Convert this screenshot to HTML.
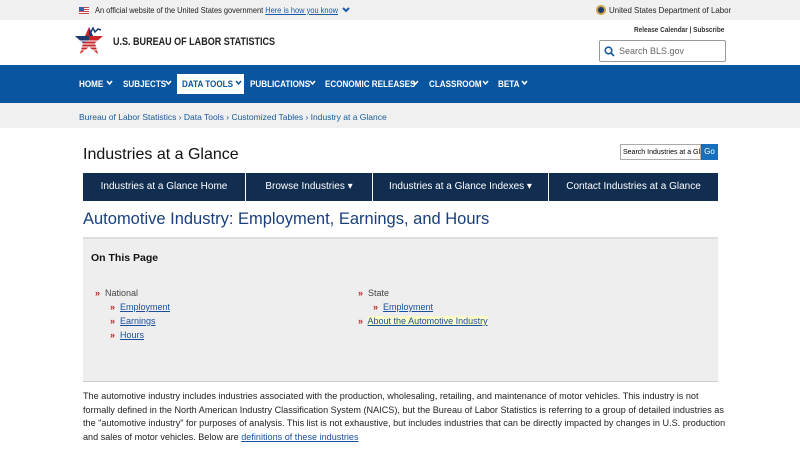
<!DOCTYPE html>
<html><head><style>
*{margin:0;padding:0;box-sizing:border-box}
body{width:800px;height:450px;overflow:hidden;font-family:"Liberation Sans",sans-serif;background:#fff;position:relative}
.a{position:absolute}
.top{left:0;top:0;width:800px;height:20px;background:#f0f0f0;font-size:8px;color:#222}
.hdr{left:0;top:20px;width:800px;height:45px;background:#fff}
.nav{left:0;top:65px;width:800px;height:38px;background:#0a559f}
.nav span{position:absolute;top:14px;font-size:9px;font-weight:bold;color:#fff;transform:scaleX(.9);transform-origin:left;white-space:nowrap}
.nav svg{position:absolute;top:15px}
.bc{left:0;top:103px;width:800px;height:25px;background:#f0f0f0;font-size:8.5px;color:#1a5a96}
.sub{top:173px;height:28px;background:#112e51;color:#fff;font-size:10px;text-align:center;line-height:28px}
a{color:#1a4f9c;text-decoration:underline}
.r{color:#b22;font-size:9px;font-weight:bold}
</style></head><body>
<div class="a top">
 <div class="a" style="left:79px;top:7px;width:10px;height:7px;background:repeating-linear-gradient(#c44 0 1px,#fff 1px 2px)"><div style="width:5px;height:4px;background:#3a5dab"></div></div>
 <div class="a" style="left:95px;top:6px;transform:scaleX(.93);transform-origin:left;white-space:nowrap">An official website of the United States government <a style="color:#1a5aaa">Here is how you know</a></div>
 <svg class="a" style="left:342px;top:7px" width="8" height="6" viewBox="0 0 8 6"><polyline points="1,1 4,4 7,1" fill="none" stroke="#1a5aaa" stroke-width="2"/></svg>
 <div class="a" style="left:596px;top:5px;width:10px;height:10px;border-radius:50%;background:#1a3a6a;border:2px solid #c8a24a"></div>
 <div class="a" style="left:609px;top:5px;font-size:8.5px;transform:scaleX(.93);transform-origin:left;white-space:nowrap">United States Department of Labor</div>
</div>
<div class="a hdr">
 <svg class="a" style="left:73px;top:4px" width="32" height="34" viewBox="0 0 32 34">
  <polygon points="16,3 20,12 30,12 22,19 25,30 16,23 7,30 10,19 2,12 12,12" fill="#c8262b"/>
  <polygon points="16,3 20,12 12,12 2,12 10,19 16,16" fill="#1c3a70"/>
  <g stroke="#fff" stroke-width="1"><line x1="6" y1="17" x2="28" y2="17"/><line x1="8" y1="20" x2="26" y2="20"/><line x1="8" y1="23" x2="24" y2="23"/><line x1="8" y1="26" x2="24" y2="26"/></g>
  <polyline points="17,10 20,4 22,8 25,5 28,6" fill="none" stroke="#1c3a70" stroke-width="1.5"/>
 </svg>
 <div class="a" style="left:113px;top:16px;font-size:11px;font-weight:bold;color:#222;transform:scaleX(.82);transform-origin:left;white-space:nowrap">U.S. BUREAU OF LABOR STATISTICS</div>
 <div class="a" style="left:634px;top:5px;font-size:7.5px;font-weight:bold;color:#333;transform:scaleX(.86);transform-origin:left;white-space:nowrap">Release Calendar | Subscribe</div>
 <div class="a" style="left:599px;top:20px;width:127px;height:22px;border:1px solid #999;border-radius:2px;font-size:9px;color:#666;padding:5px 0 0 19px">Search BLS.gov
  <svg class="a" style="left:4px;top:5px" width="11" height="11" viewBox="0 0 11 11"><circle cx="4.5" cy="4.5" r="3.3" fill="none" stroke="#1a5aa0" stroke-width="1.6"/><line x1="7" y1="7" x2="10" y2="10" stroke="#1a5aa0" stroke-width="1.8"/></svg></div>
</div>
<div class="a nav">
 <div class="a" style="left:177px;top:9px;width:67px;height:20px;background:#fff"></div>
 <span style="left:79px">HOME</span>
 <span style="left:123px">SUBJECTS</span>
 <span style="left:182px;color:#0a559f">DATA TOOLS</span>
 <span style="left:250px">PUBLICATIONS</span>
 <span style="left:325px">ECONOMIC RELEASES</span>
 <span style="left:429px">CLASSROOM</span>
 <span style="left:498px">BETA</span>
 <svg style="left:106px" width="7" height="6" viewBox="0 0 7 6"><polyline points="1,1 3.5,4 6,1" fill="none" stroke="#fff" stroke-width="1.5"/></svg>
 <svg style="left:165px" width="7" height="6" viewBox="0 0 7 6"><polyline points="1,1 3.5,4 6,1" fill="none" stroke="#fff" stroke-width="1.5"/></svg>
 <svg style="left:235px" width="7" height="6" viewBox="0 0 7 6"><polyline points="1,1 3.5,4 6,1" fill="none" stroke="#0a559f" stroke-width="1.5"/></svg>
 <svg style="left:309px" width="7" height="6" viewBox="0 0 7 6"><polyline points="1,1 3.5,4 6,1" fill="none" stroke="#fff" stroke-width="1.5"/></svg>
 <svg style="left:412px" width="7" height="6" viewBox="0 0 7 6"><polyline points="1,1 3.5,4 6,1" fill="none" stroke="#fff" stroke-width="1.5"/></svg>
 <svg style="left:482px" width="7" height="6" viewBox="0 0 7 6"><polyline points="1,1 3.5,4 6,1" fill="none" stroke="#fff" stroke-width="1.5"/></svg>
 <svg style="left:521px" width="7" height="6" viewBox="0 0 7 6"><polyline points="1,1 3.5,4 6,1" fill="none" stroke="#fff" stroke-width="1.5"/></svg>
</div>
<div class="a bc"><div class="a" style="left:79px;top:9px">Bureau of Labor Statistics › Data Tools › Customized Tables › Industry at a Glance</div></div>
<div class="a" style="left:83px;top:146px;font-size:16px;color:#111">Industries at a Glance</div>
<div class="a" style="left:620px;top:144px;width:81px;height:16px;border:1px solid #aaa;font-size:7px;padding:4px 2px;overflow:hidden;white-space:nowrap">Search Industries at a Gl</div>
<div class="a" style="left:701px;top:144px;width:17px;height:16px;background:#1a6fb8;color:#fff;font-size:8px;line-height:16px;text-align:center">Go</div>
<div class="a sub" style="left:83px;width:162px">Industries at a Glance Home</div>
<div class="a sub" style="left:246px;width:126px">Browse Industries ▾</div>
<div class="a sub" style="left:373px;width:175px">Industries at a Glance Indexes ▾</div>
<div class="a sub" style="left:549px;width:169px">Contact Industries at a Glance</div>
<div class="a" style="left:83px;top:210px;font-size:16.5px;color:#1a3f7a">Automotive Industry: Employment, Earnings, and Hours</div>
<div class="a" style="left:83px;top:237px;width:635px;height:145px;background:#eee;border-top:2px solid #ddd;border-bottom:1px solid #ccc">
 <div class="a" style="left:8px;top:13px;font-size:10.5px;font-weight:bold;color:#111">On This Page</div>
 <div class="a" style="left:12px;top:49px;font-size:9px;color:#444"><span class="r">»</span>&nbsp; National</div>
 <div class="a" style="left:27px;top:63px;font-size:9px"><span class="r">»</span>&nbsp; <a>Employment</a></div>
 <div class="a" style="left:27px;top:77px;font-size:9px"><span class="r">»</span>&nbsp; <a>Earnings</a></div>
 <div class="a" style="left:27px;top:91px;font-size:9px"><span class="r">»</span>&nbsp; <a>Hours</a></div>
 <div class="a" style="left:275px;top:49px;font-size:9px;color:#444"><span class="r">»</span>&nbsp; State</div>
 <div class="a" style="left:290px;top:63px;font-size:9px"><span class="r">»</span>&nbsp; <a>Employment</a></div>
 <div class="a" style="left:275px;top:77px;font-size:9px"><span class="r">»</span>&nbsp; <a style="background:#fdfbc8">About the Automotive Industry</a></div>
</div>
<div class="a" style="left:83px;top:390px;width:645px;font-size:9.1px;line-height:13.5px;color:#222">The automotive industry includes industries associated with the production, wholesaling, retailing, and maintenance of motor vehicles. This industry is not formally defined in the North American Industry Classification System (NAICS), but the Bureau of Labor Statistics is referring to a group of detailed industries as the "automotive industry" for purposes of analysis. This list is not exhaustive, but includes industries that can be directly impacted by changes in U.S. production and sales of motor vehicles. Below are <a>definitions of these industries</a></div>
</body></html>
